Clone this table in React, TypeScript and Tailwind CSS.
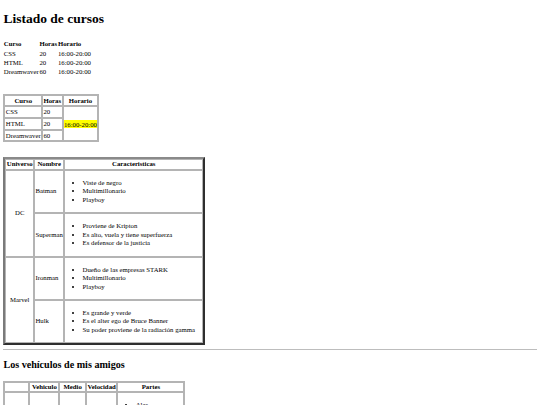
import React from "react";

const c1 = "p-[0.42px] text-left align-middle font-normal";
const h1c = "p-[0.42px] text-left align-middle font-bold";
const b2 = "border border-[#b4b4b4] px-[0.42px] py-0 leading-[9.6px] align-middle";
const b4 = "border border-[#b4b4b4] px-[0.42px] py-0 leading-[8.2px] align-middle";
const b3 = "border border-[#b4b4b4] p-[0.42px] align-middle";

function List({ items }: { items: string[] }) {
  return (
    <ul className="list-disc pl-[16.9px] my-[7.5px] leading-[8.5px]">
      {items.map((t) => (
        <li key={t}>{t}</li>
      ))}
    </ul>
  );
}

export default function App() {
  return (
    <div className="font-['Liberation_Serif',serif] text-[6.75px] leading-[8.4px] text-black bg-white px-[3.4px] w-[540px] h-[405px] overflow-hidden">
      <h1 className="text-[13.5px] leading-[17px] font-bold mt-[10px] mb-[13px]">Listado de cursos</h1>

      <table className="border-separate border-spacing-[0.84px]">
        <tbody>
          <tr>
            <th className={h1c}>Curso</th>
            <th className={h1c}>Horas</th>
            <th className={h1c}>Horario</th>
          </tr>
          <tr>
            <td className={c1}>CSS</td>
            <td className={c1}>20</td>
            <td className={c1}>16:00-20:00</td>
          </tr>
          <tr>
            <td className={c1}>HTML</td>
            <td className={c1}>20</td>
            <td className={c1}>16:00-20:00</td>
          </tr>
          <tr>
            <td className={c1}>Dreamwaver</td>
            <td className={c1}>60</td>
            <td className={c1}>16:00-20:00</td>
          </tr>
        </tbody>
      </table>

      <table className="mt-[17px] border border-[#b4b4b4] border-separate border-spacing-[0.84px]">
        <tbody>
          <tr>
            <th className={`${b2} text-center font-bold`}>Curso</th>
            <th className={`${b2} text-center font-bold`}>Horas</th>
            <th className={`${b2} text-center font-bold`}>Horario</th>
          </tr>
          <tr>
            <td className={b2}>CSS</td>
            <td className={b2}>20</td>
            <td className={b2} rowSpan={3}>
              <mark className="bg-[#ffff00] text-black py-[0.5px]">16:00-20:00</mark>
            </td>
          </tr>
          <tr>
            <td className={b2}>HTML</td>
            <td className={b2}>20</td>
          </tr>
          <tr>
            <td className={b2}>Dreamwaver</td>
            <td className={b2}>60</td>
          </tr>
        </tbody>
      </table>

      <table className="mt-[14.5px] border-2 border-solid border-t-[#8a8a8a] border-l-[#7a7a7a] border-r-[#2f2f2f] border-b-[#2f2f2f] border-separate border-spacing-[0.84px]">
        <tbody>
          <tr>
            <th className={`${b3} w-[28px] text-center font-bold`}>Universo</th>
            <th className={`${b3} w-[29px] text-center font-bold`}>Nombre</th>
            <th className={`${b3} w-[139px] text-center font-bold`}>Caracteristicas</th>
          </tr>
          <tr>
            <td className={`${b3} text-center`} rowSpan={2}>DC</td>
            <td className={b3}>Batman</td>
            <td className={b3}>
              <List items={["Viste de negro", "Multimillonario", "Playboy"]} />
            </td>
          </tr>
          <tr>
            <td className={b3}>Superman</td>
            <td className={b3}>
              <List items={["Proviene de Kripton", "Es alto, vuela y tiene superfuerza", "Es defensor de la justicia"]} />
            </td>
          </tr>
          <tr>
            <td className={`${b3} text-center`} rowSpan={2}>Marvel</td>
            <td className={b3}>Ironman</td>
            <td className={b3}>
              <List items={["Dueño de las empresas STARK", "Multimillonario", "Playboy"]} />
            </td>
          </tr>
          <tr>
            <td className={b3}>Hulk</td>
            <td className={b3}>
              <List items={["Es grande y verde", "Es el alter ego de Bruce Banner", "Su poder proviene de la radiación gamma"]} />
            </td>
          </tr>
        </tbody>
      </table>

      <hr className="mt-[3.6px] mb-0 border-0 border-t border-t-[#bdbdbd]" />

      <h2 className="text-[10.125px] leading-[12.7px] font-bold mt-[9px] mb-[9.5px]">Los vehículos de mis amigos</h2>

      <table className="border border-[#b4b4b4] border-separate border-spacing-[0.84px]">
        <tbody>
          <tr>
            <th className={`${b4} w-[25px]`}></th>
            <th className={`${b4} w-[30px] text-center font-bold`}>Vehiculo</th>
            <th className={`${b4} w-[26.5px] text-center font-bold`}>Medio</th>
            <th className={`${b4} w-[31.5px] text-center font-bold`}>Velocidad</th>
            <th className={`${b4} w-[67px] text-center font-bold`}>Partes</th>
          </tr>
          <tr>
            <td className={b3}></td>
            <td className={b3}></td>
            <td className={b3}></td>
            <td className={b3}></td>
            <td className={b3}>
              <List items={["Alas", "Motor", "Cola"]} />
            </td>
          </tr>
        </tbody>
      </table>
    </div>
  );
}
